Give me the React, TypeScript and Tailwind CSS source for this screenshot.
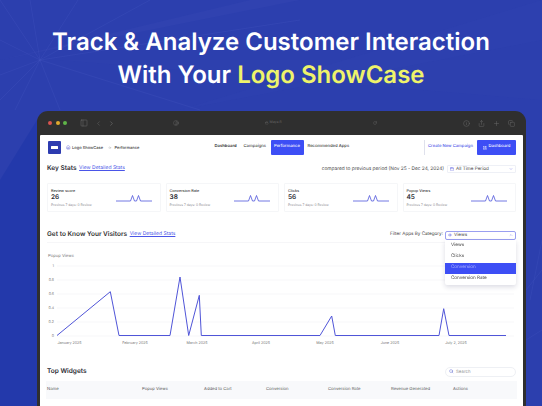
import { ChevronDown, ChevronUp, ChevronLeft, ChevronRight, PanelLeft, Contrast, Lock, RotateCw, Info, Share, Plus, Copy, Home, ArrowRight, Calendar, Search, Eye, LayoutDashboard } from "lucide-react";

const font = "font-['Inter','Liberation_Sans',sans-serif]";

function Rays() {
  const c = [
    [40, 60, 0, 0], [40, 60, 30, 0], [40, 60, 78, 0], [40, 60, 150, 0], [40, 60, 0, 40], [40, 60, 0, 75], [40, 60, 0, 100],
    [40, 60, 15, 110], [40, 60, 60, 110], [40, 60, 200, 110], [40, 60, 300, 20], [530, 300, 542, 240], [526, 340, 542, 330], [526, 290, 542, 270],
  ];
  return (
    <svg className="absolute inset-0" width="542" height="406" viewBox="0 0 542 406" fill="none">
      <path d="M0 60 L250 0 L300 0 Z" fill="#3a4cb6" opacity="0.25" />
      <path d="M60 60 L542 60 L542 100 Z" fill="#3a4cb6" opacity="0.12" />
      <path d="M180 110 L542 40 L542 0 Z" fill="#3a4cb6" opacity="0.1" />
      <path d="M0 406 L37 406 L37 120 L0 180 Z" fill="#1e35a8" opacity="0.6" />
      {c.map(([a, b, x, y], i) => (
        <line key={i} x1={a} y1={b} x2={x} y2={y} stroke="#4a5cc4" strokeWidth="0.8" opacity="0.3" />
      ))}
    </svg>
  );
}

function Spark() {
  return (
    <svg width="36" height="8" viewBox="0 0 36 8" fill="none" className="shrink-0">
      <path d="M0 7H14.5L16.5 1.5L18.5 7H20.5L22.5 1.5L24.5 7H36" stroke="#4f55dc" strokeWidth="0.8" />
    </svg>
  );
}

function Stat({ label, value }: { label: string; value: string }) {
  return (
    <div className="flex-1 h-[29px] border border-[#f5f6f8] rounded-[1px] pl-[3px] pr-[8px] flex items-center justify-between bg-white">
      <div className="flex flex-col">
        <span className="text-[3.8px] leading-[5px] font-medium text-[#333]">{label}</span>
        <span className="text-[6.5px] leading-[9px] font-semibold text-[#2a2a33]">{value}</span>
        <span className="text-[3.3px] leading-[6px] text-[#8a8a90]">Previous 7 days: 0 Review</span>
      </div>
      <Spark />
    </div>
  );
}

function Chart() {
  const ys = [["1", 265], ["0.8", 279], ["0.6", 293], ["0.4", 307], ["0.2", 321], ["0", 335]] as const;
  const xs = [["January 2025", 69.5], ["February 2025", 135], ["March 2025", 197], ["April 2025", 261], ["May 2025", 325], ["June 2025", 390], ["July 2, 2025", 456]] as const;
  const pts = "57,334.5 110.3,290.7 119,334.5 170,334.5 180,276 188.7,334.5 199.3,294.3 201.3,334.5 320,334.5 331.7,315 335.3,334.5 439,334.5 443.7,307.7 449,334.5 506,334.5";
  return (
    <svg width="483" height="96" viewBox="40 250 483 96" className="block" fill="none">
      <text x="48" y="256" fontSize="4.2" fill="#777">Popup Views</text>
      {ys.map(([l, y]) => (
        <g key={l}>
          <line x1="57" x2="514" y1={y} y2={y} stroke="#f4f4f6" strokeWidth="0.7" />
          <text x="54" y={y + 1.4} fontSize="3.6" fill="#777" textAnchor="end">{l}</text>
        </g>
      ))}
      {xs.map(([l, x]) => (
        <text key={l} x={x} y={342.5} fontSize="3.7" fill="#777" textAnchor="middle">{l}</text>
      ))}
      <polyline points={pts} stroke="#5055d8" strokeWidth="1" strokeLinejoin="round" />
    </svg>
  );
}

export default function App() {
  const heads = [["Name", "w-[95px]"], ["Popup Views", "w-[62px]"], ["Added to Cart", "w-[62px]"], ["Conversion", "w-[62px]"], ["Conversion Rate", "w-[63px]"], ["Revenue Generated", "w-[62px]"], ["Actions", "w-[50px]"]];
  return (
    <div className={`${font} [text-rendering:geometricPrecision] relative w-[542px] h-[406px] overflow-hidden bg-[#2c3fae] flex flex-col`}>
      <Rays />
      <h1 className="relative mt-[25px] text-center text-white text-[24px] leading-[33px] font-semibold">
        Track &amp; Analyze Customer Interaction
        <br />
        With Your <span className="text-[#eef36a]">Logo ShowCase</span>
      </h1>

      <div className="relative mt-[20px] ml-[37px] mr-[16px] flex-1 min-h-0 rounded-t-[11px] bg-[#2f2f2f] px-[3px] flex flex-col blur-[0.25px]">
        <div className="h-[24px] shrink-0 flex items-center text-[#6f6f6f]">
          <div className="ml-[8px] flex gap-[3.5px]">
            <span className="w-[4px] h-[4px] rounded-full bg-[#d9534f]" />
            <span className="w-[4px] h-[4px] rounded-full bg-[#e0a92e]" />
            <span className="w-[4px] h-[4px] rounded-full bg-[#5fb548]" />
          </div>
          <PanelLeft size={8} className="ml-[13px]" strokeWidth={1.5} />
          <ChevronLeft size={7} className="ml-[7px]" strokeWidth={1.5} />
          <ChevronRight size={7} className="ml-[6px] text-[#8a8a8a]" strokeWidth={1.5} />
          <Contrast size={6} className="ml-[58px]" strokeWidth={1.5} />
          <Lock size={3.5} className="ml-[86px]" />
          <span className="ml-[1px] text-[3.5px] text-[#666]">Maya.fl</span>
          <RotateCw size={4} className="ml-[91px]" />
          <Info size={7} className="ml-[86px]" strokeWidth={1.5} />
          <Share size={7} className="ml-[8px]" strokeWidth={1.5} />
          <Plus size={7} className="ml-[8px]" strokeWidth={1.5} />
          <Copy size={7} className="ml-[8px]" strokeWidth={1.5} />
        </div>

        <div className="relative flex-1 min-h-0 overflow-hidden bg-white rounded-t-[1px] pl-[7px] pr-[7px]">
          <div className="mt-[5px] h-[15px] flex items-center">
            <div className="w-[13px] h-[13px] ml-[1px] bg-[#2d3bb0] rounded-[1px] flex items-center justify-center">
              <span className="w-[7px] h-[3px] bg-white rounded-[0.5px]" />
            </div>
            <Home size={4.5} className="ml-[5px] text-[#4a4fd0]" />
            <span className="w-[33px] ml-[1.5px] text-[4px] font-medium text-[#444]">Logo ShowCase</span>
            <ArrowRight size={3.5} className="ml-[3px] text-[#888]" />
            <span className="w-[26px] ml-[3px] text-[4px] font-medium text-[#444]">Performance</span>
            <div className="ml-[74px] flex items-center h-full text-[4.2px] font-medium text-[#333]">
              <span className="w-[23px] font-semibold">Dashboard</span>
              <span className="w-[23px] ml-[6px] text-[#444]">Campaigns</span>
              <span className="ml-[4px] h-full w-[33px] flex items-center justify-center bg-[#3d4ef5] text-white rounded-[1px]">Performance</span>
              <span className="ml-[4px]">Recommended Apps</span>
            </div>
            <div className="ml-auto flex items-center h-full">
              <span className="h-full border-l border-[#dfe1ec] pl-[3px] flex items-center text-[4.2px] font-medium text-[#4a55e8] mr-[4px]">Create New Campaign</span>
              <span className="h-full w-[39px] bg-[#3d4ef5] rounded-[1px] text-white text-[4.2px] font-medium flex items-center justify-center gap-[2px]">
                <LayoutDashboard size={4} />
                Dashboard
              </span>
            </div>
          </div>

          <div className="mt-[9px] h-[10px] flex items-center">
            <span className="text-[6.5px] font-semibold text-[#2a2a33]">Key Stats</span>
            <span className="ml-[2.5px] text-[5px] text-[#4a55e8] underline">View Detailed Stats</span>
            <span className="ml-auto pt-[2px] text-[4.8px] text-[#444]">compared to previous period (Nov 25 - Dec 24, 2024)</span>
            <div className="ml-[3px] w-[69px] h-[8px] border border-[#eef0f6] rounded-[1px] flex items-center px-[2px] text-[4.6px] text-[#444]">
              <Calendar size={4} className="text-[#5a5fe0] mr-[2px]" />
              <span className="pt-[3px]">All Time Period</span>
              <ChevronDown size={4} className="ml-auto text-[#5a5fe0]" />
            </div>
          </div>

          <div className="mt-[9px] flex gap-[5px]">
            <Stat label="Review score" value="26" />
            <Stat label="Conversion Rate" value="38" />
            <Stat label="Clicks" value="56" />
            <Stat label="Popup Views" value="45" />
          </div>

          <div className="mt-[18px] h-[10px] flex items-center">
            <span className="text-[6.5px] font-semibold text-[#333]">Get to Know Your Visitors</span>
            <span className="ml-[2.5px] text-[5px] text-[#4a55e8] underline">View Detailed Stats</span>
            <span className="ml-auto pt-[1px] text-[4.6px] text-[#444]">Filter Apps By Category:</span>
            <div className="relative ml-[2px] w-[71px] h-[9px] border border-[#9a9ff0] rounded-[2px] flex items-center px-[2px] text-[4.6px] text-[#444]">
              <Eye size={4} className="text-[#5a5fe0] mr-[2px]" />
              <span className="pt-[3px]">Views</span>
              <ChevronUp size={4} className="ml-auto text-[#5a5fe0]" />
              <div className="absolute z-10 -left-px top-[8.5px] w-[71px] h-[45px] bg-white rounded-b-[2px] shadow-[0_2px_5px_rgba(30,30,80,0.16)] pt-[1px] text-[4.6px] text-[#444] flex flex-col">
                <span className="h-[11px] pl-[6px] flex items-center">Views</span>
                <span className="h-[11.5px] pl-[6px] flex items-center">Clicks</span>
                <span className="h-[11.5px] pl-[6px] flex items-center bg-[#3d4ef5] text-[#a9b0ff]">Conversion</span>
                <span className="h-[11px] pl-[6px] flex items-center">Conversion Rate</span>
              </div>
            </div>
          </div>
          <div className="border-t border-[#f6f6f8] mt-[2px]" />

          <div className="-mx-[7px] mt-[8px]">
            <Chart />
          </div>

          <div className="mt-[19px] h-[11px] flex items-center justify-between">
            <span className="text-[6.5px] font-semibold text-[#2a2a33]">Top Widgets</span>
            <div className="w-[71px] h-[10px] border border-[#eef0f4] rounded-full flex items-center pl-[3px] text-[4.4px] text-[#999]">
              <Search size={4.5} className="text-[#4a55c8] mr-[2.5px]" />
              <span className="pt-[3px]">Search</span>
            </div>
          </div>
          <div className="mt-[4px] -mx-[1px] h-[18px] pt-[1px] bg-[#f8f9fb] flex items-center pl-[1px] text-[4.2px] text-[#555]">
            {heads.map(([t, w]) => (
              <span key={t} className={w}>{t}</span>
            ))}
          </div>
          <div className="mt-[7px] ml-[410px] w-[37px] h-[3px] border-t border-x border-[#3d4ef5] rounded-t-[1px]" />
        </div>
      </div>
    </div>
  );
}
